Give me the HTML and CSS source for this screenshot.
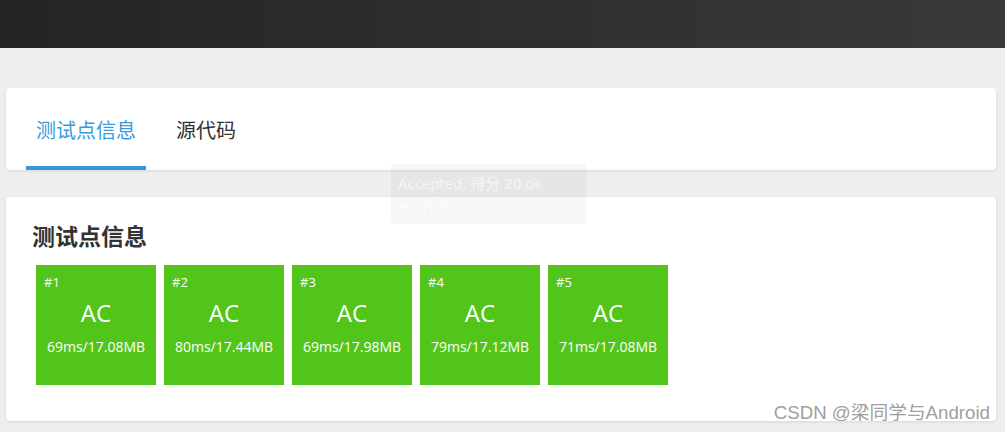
FILE: index.html
```html
<!DOCTYPE html>
<html>
	<head>
		<meta charset="utf-8">
		<title>测试点信息</title>
		<link rel="stylesheet" href="styles.css">
	</head>
	<body>
		<div class="topbar"></div>
		<div class="main">
			<div class="card tabs">
				<div class="tab active">测试点信息</div>
				<div class="tab">源代码</div>
			</div>
			<div class="card cases">
				<h2 class="title">测试点信息</h2>
				<div class="list">
					<div class="case">
						<div class="num">#1</div>
						<div class="res">AC</div>
						<div class="info">69ms/17.08MB</div>
					</div>
					<div class="case">
						<div class="num">#2</div>
						<div class="res">AC</div>
						<div class="info">80ms/17.44MB</div>
					</div>
					<div class="case">
						<div class="num">#3</div>
						<div class="res">AC</div>
						<div class="info">69ms/17.98MB</div>
					</div>
					<div class="case">
						<div class="num">#4</div>
						<div class="res">AC</div>
						<div class="info">79ms/17.12MB</div>
					</div>
					<div class="case">
						<div class="num">#5</div>
						<div class="res">AC</div>
						<div class="info">71ms/17.08MB</div>
					</div>
				</div>
			</div>
		</div>
		<!-- 正在淡出的提示框 -->
		<div class="tip">Accepted, 得分 20.ok<br>accepted</div>
		<div class="mark">CSDN @梁同学与Android</div>
	</body>
</html>
```

FILE: styles.css
```css
* {
	margin: 0;
	padding: 0;
	box-sizing: border-box;
}

body {
	background-color: #eeeeee;
	font-family: "Open Sans", "Noto Sans CJK SC", sans-serif;
	color: #333;
	height: 432px;
	overflow: hidden;
}

.topbar {
	height: 48px;
	background: linear-gradient(to right, #232426, #38393b);
}

.main {
	padding: 40px 9px 0 6px;
}

.card {
	background-color: #fff;
	border-radius: 4px;
	box-shadow: 0 1px 3px rgba(0, 0, 0, 0.1);
}

.tabs {
	display: flex;
	gap: 10px;
	padding: 0 20px;
	height: 82px;
}

.tab {
	padding: 6px 10px 0;
	line-height: 72px;
	font-size: 20px;
	color: #333;
	border-bottom: 4px solid transparent;
	font-family: "Noto Sans CJK SC", sans-serif;
}

.tab + .tab {
	margin-left: 10px;
}

.tab.active {
	color: #3a9ade;
	border-bottom-color: #3498db;
}

.cases {
	margin-top: 27px;
	padding: 22px 20px 36px 26px;
}

.title {
	font-size: 23px;
	line-height: 32px;
	font-weight: bold;
	color: #333;
	font-family: "Noto Sans CJK SC", sans-serif;
}

.list {
	display: flex;
	gap: 8px;
	margin: 14px 0 0 4px;
}

.case {
	width: 120px;
	height: 120px;
	background-color: #52c41a;
	color: #fff;
	padding: 8px;
	text-align: center;
}

.num {
	text-align: left;
	font-size: 13px;
	line-height: 18px;
}

.res {
	margin-top: 7px;
	font-size: 24px;
	line-height: 30px;
}

.info {
	margin-top: 9px;
	font-size: 14px;
	line-height: 20px;
}

.tip {
	position: absolute;
	left: 391px;
	top: 164px;
	width: 195px;
	height: 60px;
	padding: 8px 7px;
	border-radius: 3px;
	background-color: rgba(0, 0, 0, 0.03);
	color: rgba(255, 255, 255, 0.65);
	font-size: 15px;
	line-height: 22px;
}

.mark {
	position: absolute;
	right: 15px;
	bottom: 8px;
	font-family: "Liberation Sans", "Noto Sans CJK SC", sans-serif;
	font-size: 18.7px;
	color: #a0a0a0;
	text-shadow: 0 0 2px #fff;
}
```
